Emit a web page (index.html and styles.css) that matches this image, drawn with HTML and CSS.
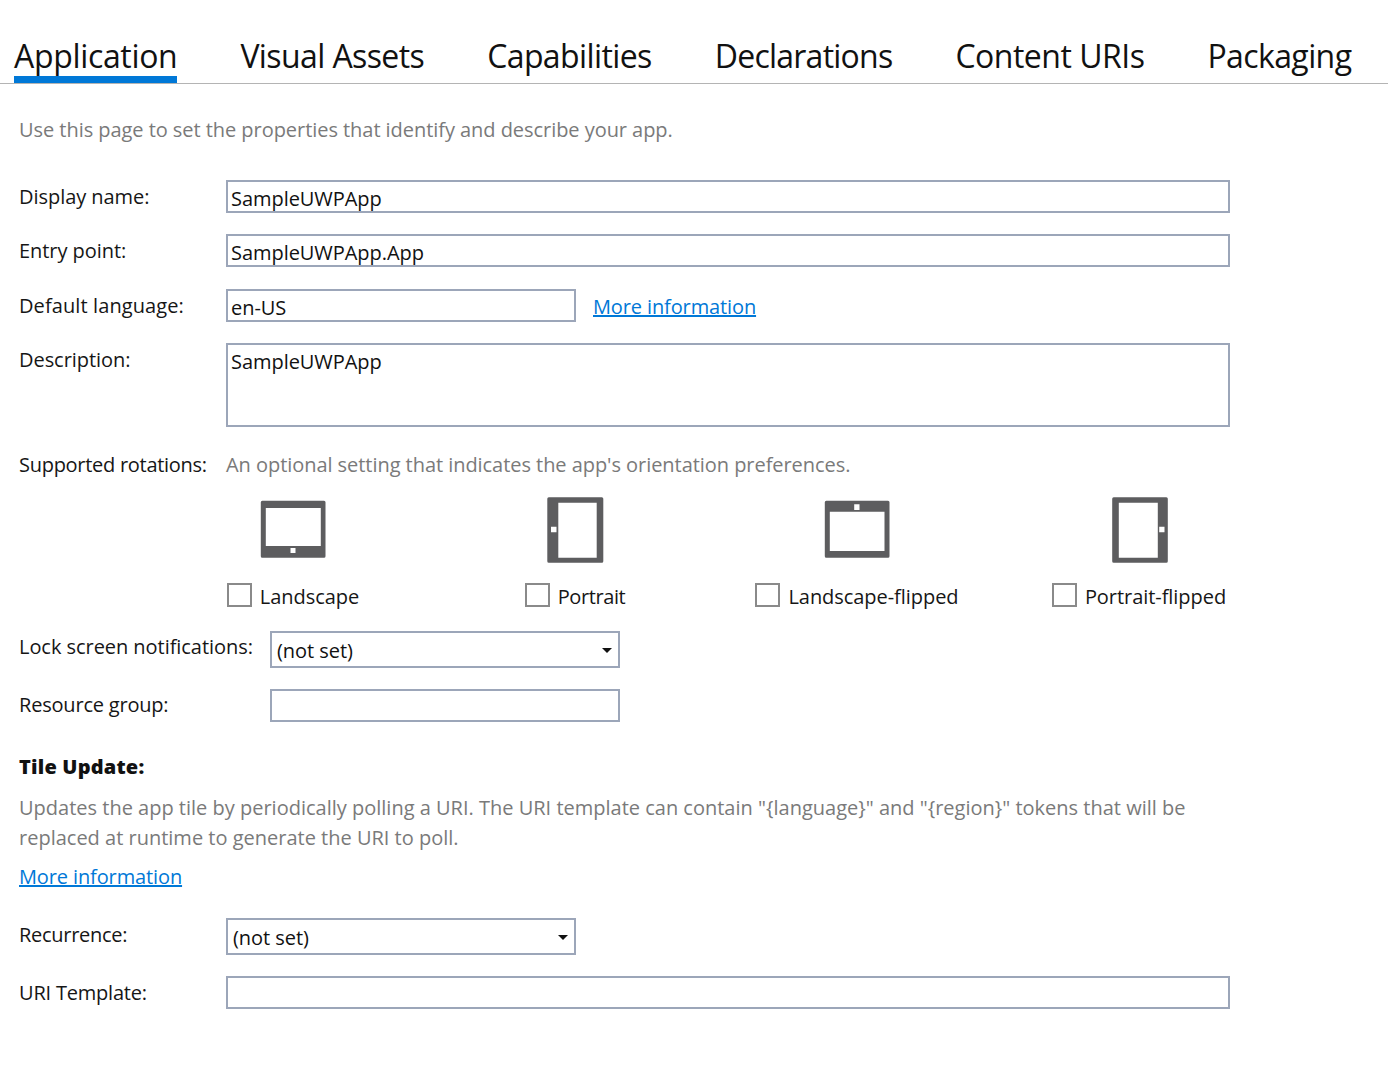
FILE: index.html
```html
<!DOCTYPE html>
<html lang="en">
<head>
    <meta charset="UTF-8">
    <title>Package manifest</title>
    <link rel="stylesheet" href="styles.css">
</head>
<body>

<nav class="tabs">
    <a class="tab active">Application</a>
    <a class="tab">Visual Assets</a>
    <a class="tab">Capabilities</a>
    <a class="tab tab-tight">Declarations</a>
    <a class="tab tab-loose">Content URIs</a>
    <a class="tab">Packaging</a>
</nav>

<main class="page">
    <p class="intro muted">Use this page to set the properties that identify and describe your app.</p>

    <div class="row row-name">
        <label class="label label-field">Display name:</label>
        <div class="field">SampleUWPApp</div>
    </div>
    <div class="row row-entry">
        <label class="label label-field">Entry point:</label>
        <div class="field">SampleUWPApp.App</div>
    </div>
    <div class="row row-lang">
        <label class="label label-field label-loose">Default language:</label>
        <div class="field field-short">en-US</div>
        <a class="link">More information</a>
    </div>
    <div class="row row-desc">
        <label class="label label-field">Description:</label>
        <div class="field field-area">SampleUWPApp</div>
    </div>

    <div class="row row-rot">
        <label class="label label-tight">Supported rotations:</label>
        <span class="muted">An optional setting that indicates the app's orientation preferences.</span>
    </div>

    <div class="rotations">
        <div class="rotation">
            <svg class="device" width="66" height="66" viewBox="0 0 66 66">
                <path fill="#5d5d5f" fill-rule="evenodd" d="M2.300 3.700h61.700a1.500 1.500 0 0 1 1.500 1.500v54a1.500 1.500 0 0 1-1.500 1.500H2.300a1.500 1.500 0 0 1-1.500-1.500v-54a1.500 1.500 0 0 1 1.500-1.500zM5.800 11v38h55V11zM30.500 51v5h5v-5z"/>
            </svg>
            <label class="check"><span class="box"></span>Landscape</label>
        </div>
        <div class="rotation">
            <svg class="device" width="66" height="66" viewBox="0 0 66 66">
                <path fill="#5d5d5f" fill-rule="evenodd" d="M6.800.3h53a1.500 1.500 0 0 1 1.500 1.500v62.400a1.500 1.500 0 0 1-1.500 1.500h-53a1.500 1.500 0 0 1-1.500-1.500V1.800a1.500 1.500 0 0 1 1.500-1.500zM16.300 5.700v55h38.400v-55zM9 29.700v5.600h5.500v-5.600z"/>
            </svg>
            <label class="check check-tight"><span class="box"></span>Portrait</label>
        </div>
        <div class="rotation">
            <svg class="device" width="66" height="66" viewBox="0 0 66 66">
                <path fill="#5d5d5f" fill-rule="evenodd" d="M2.300 3.700h61.700a1.500 1.500 0 0 1 1.500 1.500v54a1.500 1.500 0 0 1-1.500 1.500H2.300a1.500 1.500 0 0 1-1.500-1.500v-54a1.500 1.500 0 0 1 1.500-1.500zM5.800 14.700V54h54.700V14.700zM30.200 7.300V13h5.300V7.300z"/>
            </svg>
            <label class="check"><span class="box"></span>Landscape-flipped</label>
        </div>
        <div class="rotation">
            <svg class="device" width="66" height="66" viewBox="0 0 66 66">
                <path fill="#5d5d5f" fill-rule="evenodd" d="M7.700.3h52.600a1.500 1.500 0 0 1 1.500 1.500v62.400a1.500 1.500 0 0 1-1.500 1.500H7.700a1.500 1.500 0 0 1-1.500-1.500V1.800A1.500 1.500 0 0 1 7.700.3zM12.800 5.700v55h39v-55zM53.200 29.700v5.600h5.300v-5.600z"/>
            </svg>
            <label class="check"><span class="box"></span>Portrait-flipped</label>
        </div>
    </div>

    <div class="row row-lock">
        <label class="label label-wide">Lock screen notifications:</label>
        <div class="field field-select">(not set)</div>
    </div>
    <div class="row row-group">
        <label class="label label-wide label-narrow">Resource group:</label>
        <div class="field field-short"></div>
    </div>

    <h3 class="heading">Tile Update:</h3>
    <p class="muted tile-text">Updates the app tile by periodically polling a URI. The URI template can contain "{language}" and "{region}" tokens that will be replaced at runtime to generate the URI to poll.</p>
    <a class="link link-block">More information</a>

    <div class="row row-recur">
        <label class="label label-field label-tight">Recurrence:</label>
        <div class="field field-select">(not set)</div>
    </div>
    <div class="row row-uri">
        <label class="label label-field label-narrow">URI Template:</label>
        <div class="field"></div>
    </div>
</main>

</body>
</html>
```

FILE: styles.css
```css
body { margin: 0; font-family: "Open Sans", "Noto Sans", sans-serif; font-size: 20px; line-height: 30px; color: #161616; background: #fff; letter-spacing: -0.05px; }
p { margin: 0; }

.tabs { display: flex; gap: 63px; height: 83px; padding-left: 14px; border-bottom: 1px solid #b4b4b4; }
.tab { height: 83px; box-sizing: border-box; padding-top: 34px; font-size: 32px; line-height: 44px; color: #111; letter-spacing: -0.6px; }
.tab.active { border-bottom: 7px solid #0078d7; letter-spacing: -0.33px; }
.tab-tight { letter-spacing: -0.77px; }
.tab-loose { letter-spacing: -0.5px; }

.page { width: 1211px; padding-left: 19px; }
.muted { color: #7a7a7a; }
.intro { margin-top: 31px; height: 30px; }

.row { display: flex; align-items: flex-start; }
.label { width: 207px; flex: none; }
.label-wide { width: 251px; padding-top: 1px; }
.label-field { padding-top: 2px; }
.label-loose { letter-spacing: 0.1px; }
.label-narrow { letter-spacing: -0.2px; }
.label-tight { letter-spacing: -0.28px; }

.field { flex: 1; height: 33px; box-sizing: border-box; border: 2px solid #9ca6b9; padding-left: 3px; line-height: 33px; color: #111; }
.field-short { flex: none; width: 350px; }
.field-area { height: 84px; line-height: 33px; }
.field-select { flex: none; width: 350px; height: 37px; line-height: 35px; padding-left: 5px; position: relative; }
.field-select::after { content: ""; position: absolute; right: 6px; top: 15px; border: 5px solid transparent; border-top: 5px solid #111; border-bottom: 0; }

.link { color: #0078d7; text-decoration: underline; letter-spacing: -0.12px; }
.row .link { margin-left: 17px; margin-top: 3px; }
.link-block { display: block; margin-top: 9px; }

.row-name { margin-top: 35px; }
.row-entry { margin-top: 21px; }
.row-lang { margin-top: 22px; }
.row-desc { margin-top: 21px; }
.row-rot { margin-top: 23px; }
.row-lock { margin-top: 19px; }
.row-group { margin-top: 21px; }
.row-recur { margin-top: 26px; }
.row-uri { margin-top: 21px; }

.rotations { display: grid; grid-template-columns: repeat(4, 282px); justify-items: center; margin-top: 17px; margin-left: 133px; }
.rotation { display: flex; flex-direction: column; align-items: center; }
.device { display: block; }
.check { display: flex; align-items: center; gap: 8px; margin-top: 19px; height: 30px; white-space: nowrap; }
.check-tight { letter-spacing: -0.4px; }
.box { width: 25px; height: 24px; box-sizing: border-box; border: 2px solid #8a8a8a; margin-top: -5px; }

.heading { margin: 30px 0 0; font-size: 20px; font-weight: 800; line-height: 30px; color: #111; letter-spacing: 0.2px; }
.tile-text { margin-top: 11px; width: 1190px; letter-spacing: 0; }
```
